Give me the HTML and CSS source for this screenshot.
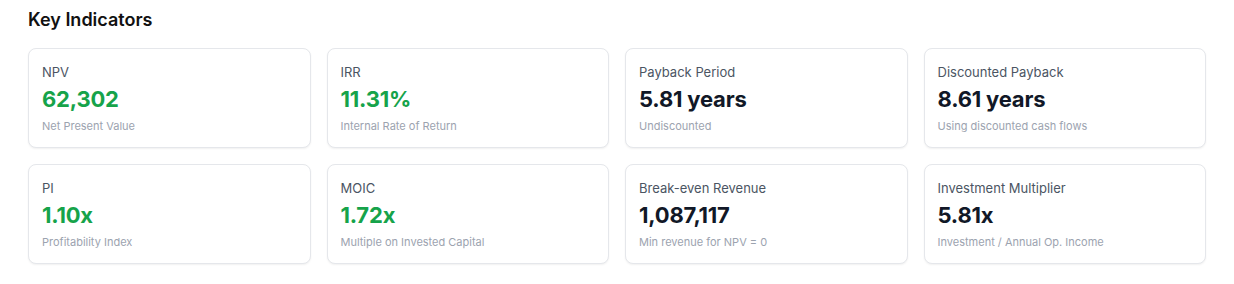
FILE: index.html
```html
<!DOCTYPE html>
<html lang="en">
<head>
  <meta charset="UTF-8">
  <meta name="viewport" content="width=device-width, initial-scale=1.0">
  <title>Key Indicators</title>
  <link rel="stylesheet" href="styles.css">
</head>
<body>
  <h2 class="section-title">Key Indicators</h2>
  <div class="kpi-grid">
    <div class="kpi-card">
      <div class="kpi-label">NPV</div>
      <div class="kpi-value positive">62,302</div>
      <div class="kpi-sub">Net Present Value</div>
    </div>
    <div class="kpi-card">
      <div class="kpi-label">IRR</div>
      <div class="kpi-value positive">11.31%</div>
      <div class="kpi-sub">Internal Rate of Return</div>
    </div>
    <div class="kpi-card">
      <div class="kpi-label">Payback Period</div>
      <div class="kpi-value">5.81 years</div>
      <div class="kpi-sub">Undiscounted</div>
    </div>
    <div class="kpi-card">
      <div class="kpi-label">Discounted Payback</div>
      <div class="kpi-value">8.61 years</div>
      <div class="kpi-sub">Using discounted cash flows</div>
    </div>
    <div class="kpi-card">
      <div class="kpi-label">PI</div>
      <div class="kpi-value positive">1.10x</div>
      <div class="kpi-sub">Profitability Index</div>
    </div>
    <div class="kpi-card">
      <div class="kpi-label">MOIC</div>
      <div class="kpi-value positive">1.72x</div>
      <div class="kpi-sub">Multiple on Invested Capital</div>
    </div>
    <div class="kpi-card">
      <div class="kpi-label">Break-even Revenue</div>
      <div class="kpi-value">1,087,117</div>
      <div class="kpi-sub">Min revenue for NPV = 0</div>
    </div>
    <div class="kpi-card">
      <div class="kpi-label">Investment Multiplier</div>
      <div class="kpi-value">5.81x</div>
      <div class="kpi-sub">Investment / Annual Op. Income</div>
    </div>
  </div>
</body>
</html>
```

FILE: styles.css
```css
body {
  font-family: 'Inter', 'Noto Sans', sans-serif;
  background-color: #ffffff;
  margin: 0;
  padding: 8px 28px 20px 28px;
  color: #111827;
}

.section-title {
  margin: 0 0 16px 0;
  font-size: 18px;
  line-height: 24px;
  font-weight: 600;
  color: #111111;
}

.kpi-grid {
  display: grid;
  grid-template-columns: repeat(4, 1fr);
  gap: 16px;
}

.kpi-card {
  border: 1px solid #e5e7eb;
  border-radius: 8px;
  padding: 13px;
  background-color: #fff;
  box-shadow: 0 1px 2px rgba(0, 0, 0, 0.06);
}

.kpi-label {
  font-size: 13px;
  line-height: 20px;
  color: #4b5563;
}

.kpi-value {
  margin-top: 3px;
  font-size: 22px;
  line-height: 28px;
  font-weight: 700;
  letter-spacing: -0.2px;
  color: #111827;
}

.kpi-value.positive {
  color: #16a34a;
}

.kpi-sub {
  margin-top: 5px;
  font-size: 11px;
  line-height: 16px;
  color: #9ca3af;
}
```
